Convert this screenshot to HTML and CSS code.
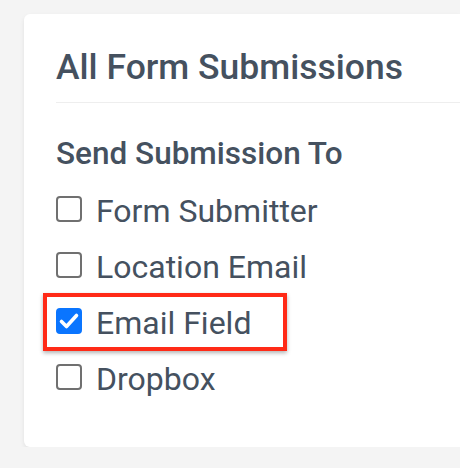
FILE: index.html
```html
<!DOCTYPE html>
<html>

<head>
    <meta charset="utf-8">
    <title>Form submissions</title>
    <link rel="stylesheet" href="styles.css">
</head>

<body>
    <div class="card">
        <div class="card-header">
            <h2>All Form Submissions</h2>
        </div>

        <div class="card-body">
            <h3>Send Submission To</h3>

            <label class="option">
                <span class="box"></span>
                <span>Form Submitter</span>
            </label>
            <label class="option">
                <span class="box"></span>
                <span>Location Email</span>
            </label>
            <label class="option highlighted">
                <span class="box checked">
                    <svg width="22" height="22" viewBox="0 0 22 22">
                        <path d="M3.5 11.5 L8.5 16.5 L18.5 5.5" fill="none" stroke="#fff" stroke-width="3.6" stroke-linecap="round" stroke-linejoin="round"/>
                    </svg>
                </span>
                <span>Email Field</span>
            </label>
            <label class="option">
                <span class="box"></span>
                <span>Dropbox</span>
            </label>
        </div>
    </div>
</body>

</html>
```

FILE: styles.css
```css
body {
    margin: 0;
    overflow: hidden;
    background-color: #f4f4f4;
    font-family: Roboto, "Liberation Sans", sans-serif;
    color: #45515f;
}

.card {
    margin: 14px 0 0 24px;
    width: 436px;
    height: 433px;
    background-color: #fff;
    border-radius: 6px 0 0 6px;
    box-shadow: 0 2px 4px rgba(0, 0, 0, 0.08);
}

.card-header {
    margin: 0 0 0 32px;
    padding: 32px 0 14px;
    border-bottom: 1px solid #eeeeee;
}

.card-header h2 {
    margin: 0;
    font-size: 35.5px;
    font-weight: 500;
    line-height: 42px;
}

.card-body {
    padding: 33px 0 0 32px;
}

.card-body h3 {
    margin: 0 0 21px;
    font-size: 31.5px;
    font-weight: 500;
    line-height: 36px;
}

.option {
    position: relative;
    display: flex;
    align-items: flex-start;
    gap: 14px;
    margin-bottom: 20px;
    font-size: 32px;
    line-height: 36px;
}

.box {
    box-sizing: border-box;
    width: 26px;
    height: 26px;
    margin-top: 3px;
    border: 2px solid #707070;
    border-radius: 4px;
    display: flex;
    align-items: center;
    justify-content: center;
}

.box.checked {
    background-color: #0a75ff;
    border-color: #0a75ff;
}

.highlighted::before {
    content: "";
    position: absolute;
    left: -13px;
    top: -12px;
    width: 244px;
    height: 58px;
    box-sizing: border-box;
    border: 4px solid #ff2a17;
    box-shadow: 0 2px 4px rgba(0, 0, 0, 0.3);
}
```
